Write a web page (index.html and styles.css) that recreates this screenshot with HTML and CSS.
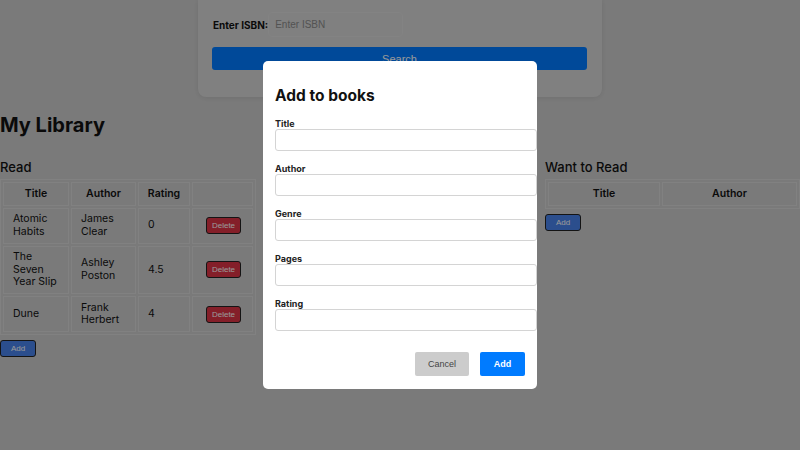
FILE: index.html
```html
<!DOCTYPE html>
<html>
<head>
<meta charset="utf-8">
<link rel="stylesheet" href="styles.css">
</head>
<body>
<div class="search-card">
  <div class="isbn-row">
    <label class="isbn-label">Enter ISBN:</label>
    <input class="isbn-input" type="text" placeholder="Enter ISBN">
  </div>
  <button class="search-btn">Search</button>
</div>

<h1 class="page-title">My Library</h1>

<div class="lists">
  <section class="list read">
    <h3 class="list-title">Read</h3>
    <table class="books read-table">
      <thead>
        <tr><th class="c-title">Title</th><th class="c-author">Author</th><th class="c-rating">Rating</th><th class="c-act"></th></tr>
      </thead>
      <tbody>
        <tr><td>Atomic Habits</td><td>James Clear</td><td>0</td><td class="act"><button class="del-btn">Delete</button></td></tr>
        <tr><td>The Seven Year Slip</td><td>Ashley Poston</td><td>4.5</td><td class="act"><button class="del-btn">Delete</button></td></tr>
        <tr><td>Dune</td><td>Frank Herbert</td><td>4</td><td class="act"><button class="del-btn">Delete</button></td></tr>
      </tbody>
    </table>
    <button class="add-btn">Add</button>
  </section>

  <section class="list want">
    <h3 class="list-title">Want to Read</h3>
    <table class="books want-table">
      <thead>
        <tr><th class="w-title">Title</th><th>Author</th></tr>
      </thead>
    </table>
    <button class="add-btn">Add</button>
  </section>
</div>

<div class="overlay">
  <div class="modal">
    <h2 class="modal-title">Add to books</h2>
    <div class="field"><label>Title</label><input type="text"></div>
    <div class="field"><label>Author</label><input type="text"></div>
    <div class="field"><label>Genre</label><input type="text"></div>
    <div class="field"><label>Pages</label><input type="text"></div>
    <div class="field"><label>Rating</label><input type="text"></div>
    <div class="modal-actions">
      <button class="cancel-btn">Cancel</button>
      <button class="confirm-btn">Add</button>
    </div>
  </div>
</div>
</body>
</html>
```

FILE: styles.css
```css
html, body {
  margin: 0;
  padding: 0;
}
body {
  font-family: Inter, "Noto Sans", sans-serif;
  background: #cbcbcb;
  color: #111;
  width: 800px;
  height: 450px;
  overflow: hidden;
}

.search-card {
  width: 375px;
  margin: 0 auto;
  padding: 12px 15px 27px 14px;
  background: #d5d5d5;
  border-radius: 0 0 8px 8px;
  box-shadow: 0 1px 4px rgba(0,0,0,0.08);
}
.isbn-row {
  display: flex;
  align-items: center;
  gap: 0;
}
.isbn-label {
  font-size: 10px;
  font-weight: 700;
  margin-left: 1px;
}
.isbn-input {
  width: 135px;
  height: 25px;
  box-sizing: border-box;
  padding: 0 6px;
  border: 1px solid #dadada;
  border-radius: 4px;
  background: #d5d5d5;
  font-family: "Liberation Sans", Arial, sans-serif;
  font-size: 10px;
  outline: none;
}
.isbn-input::placeholder { color: #8a8a8a; }
.search-btn {
  display: block;
  width: 375px;
  height: 23px;
  margin-top: 10px;
  border: none;
  border-radius: 3px;
  background: #007bff;
  color: #fff;
  font-family: "Liberation Sans", Arial, sans-serif;
  font-size: 11px;
}

.page-title {
  margin: 15px 0 0 0;
  font-size: 20px;
  font-weight: 700;
  line-height: 26px;
}

.lists {
  display: flex;
  justify-content: space-between;
  margin-top: 21px;
}
.list-title {
  margin: 0 0 4px 0;
  font-size: 13px;
  font-weight: 500;
  line-height: 16px;
}
.read { width: 256px; }
.want { width: 255px; }

.books {
  border-collapse: separate;
  border-spacing: 2px;
  border: 1px solid #d8d8d8;
  font-size: 10.5px;
  line-height: 12.5px;
  width: 100%;
  table-layout: fixed;
}
.books th, .books td {
  border: 1px solid #d8d8d8;
  padding: 4.5px 9px;
  text-align: left;
  font-weight: 400;
}
.books th {
  font-weight: 600;
  text-align: center;
  padding: 4.5px 4px;
}
.c-title { width: 56px; }
.c-author { width: 55px; }
.c-rating { width: 42px; }
.w-title { width: 102px; }
.books td.act { text-align: center; padding: 4.5px 4px 4.5px 6px; }

.del-btn {
  font-family: "Liberation Sans", Arial, sans-serif;
  font-size: 8px;
  color: #fff;
  background: #dc3545;
  border: 1px solid #222;
  border-radius: 3px;
  padding: 3px 5px;
  line-height: 9px;
}
.add-btn {
  display: block;
  margin-top: 5px;
  font-family: "Liberation Sans", Arial, sans-serif;
  font-size: 8px;
  color: #fff;
  background: #4983ec;
  border: 1px solid #222;
  border-radius: 3px;
  padding: 3px 10px;
  line-height: 9px;
}

.overlay {
  position: fixed;
  inset: 0;
  background: rgba(0,0,0,0.4);
  display: flex;
  align-items: center;
  justify-content: center;
}
.modal {
  width: 250px;
  padding: 25px 12px 13px 12px;
  background: #fff;
  border-radius: 5px;
}
.modal-title {
  margin: 0 0 12px 0;
  font-size: 15.5px;
  font-weight: 700;
  line-height: 20px;
  color: #111;
}
.field { margin-bottom: 12px; }
.field label {
  display: block;
  font-size: 9px;
  font-weight: 700;
  line-height: 11px;
  color: #222;
}
.field input {
  display: block;
  width: 100%;
  height: 10px;
  padding: 5px;
  border: 1px solid #d4d4d4;
  border-radius: 3px;
  background: #fff;
  outline: none;
}
.modal-actions {
  display: flex;
  justify-content: flex-end;
  gap: 11px;
  margin-top: 21px;
}
.cancel-btn, .confirm-btn {
  height: 24px;
  border: none;
  border-radius: 2px;
  font-family: "Liberation Sans", Arial, sans-serif;
  font-size: 9px;
}
.cancel-btn {
  width: 54px;
  background: #cccccc;
  color: #444;
}
.confirm-btn {
  width: 45px;
  background: #007bff;
  color: #fff;
  font-weight: 700;
}
```
